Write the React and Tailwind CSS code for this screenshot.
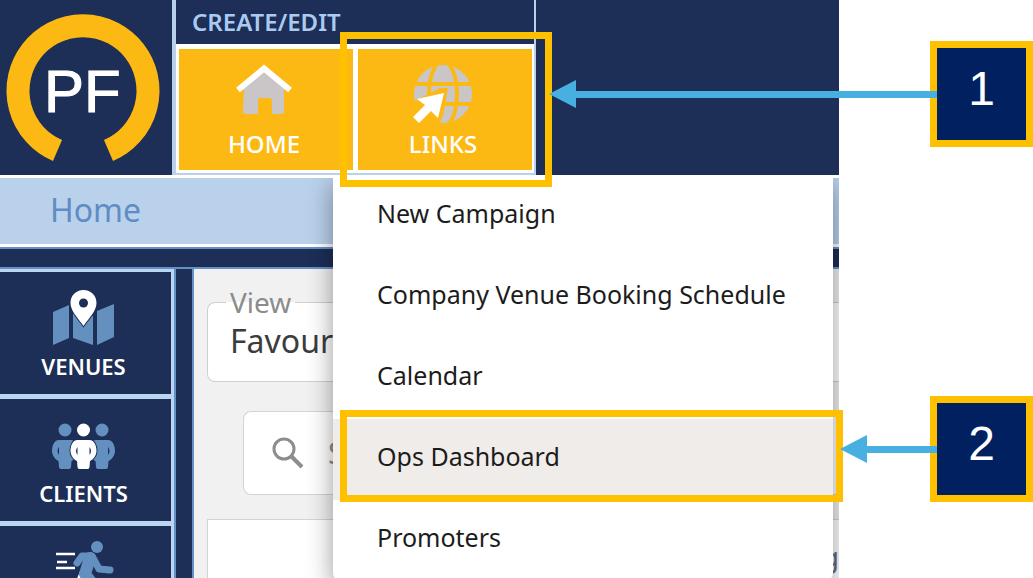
import React from 'react'

const menuItems = [
    { label: 'New Campaign' },
    { label: 'Company Venue Booking Schedule' },
    { label: 'Calendar' },
    { label: 'Ops Dashboard', active: true },
    { label: 'Promoters' },
]

function Logo() {
    return (
        <svg viewBox="0 0 172 175" className="w-[172px] h-[175px] shrink-0" role="img" aria-label="PF">
            <path d="M57.5 150.5 A65 65 0 1 1 108.5 150.5" fill="none" stroke="#fdb913" strokeWidth="23" />
            <text x="44" y="112" fontSize="60" fill="#ffffff" stroke="#ffffff" strokeWidth="1" fontFamily="Liberation Sans, sans-serif">PF</text>
        </svg>
    )
}

function HomeIcon() {
    return (
        <svg viewBox="0 0 60 60" className="w-[60px] h-[60px]" aria-hidden="true">
            <path d="M10 24 L30 8 L50 24 V48 Q50 50 48 50 H38 V37 Q38 34 35 34 H27 Q24 34 24 37 V50 H11 Q9 50 9 48 Z" fill="#cac5c7" />
            <path d="M4 26 L30 4.5 L56 26" fill="none" stroke="#ffffff" strokeWidth="6" />
        </svg>
    )
}

function LinksIcon() {
    return (
        <svg viewBox="0 0 60 60" className="w-[60px] h-[60px]" aria-hidden="true">
            <circle cx="30" cy="30" r="29" fill="#cac5c7" />
            <g fill="none" stroke="#fdb913" strokeWidth="4">
                <path d="M0 20 H60 M0 40 H60" />
                <ellipse cx="30" cy="30" rx="14" ry="33" />
            </g>
            <path d="M0 38 L-2 60 H26 L30 52 L35 24 L27 24 Z" fill="#fdb913" />
            <path d="M31 29 L25 54 L18 47 L6 59 L0 53 L12 41 L4 35 Z" fill="#ffffff" />
        </svg>
    )
}

function VenuesIcon() {
    return (
        <svg viewBox="0 0 64 56" className="w-16 h-14" aria-hidden="true">
            <path d="M1 22 L17 15 V48 L1 55 Z M21 22 L41 26 V55 L21 48 Z M45 21 L62 14 V47 L45 55 Z" fill="#6490c0" />
            <path
                d="M31.5 0 C24 0 18.5 5.5 18.5 13 C18.5 21 26 28 31.5 36 C37 28 44.5 21 44.5 13 C44.5 5.5 39 0 31.5 0 Z"
                fill="#ffffff"
                stroke="#1d2e57"
                strokeWidth="2"
                paintOrder="stroke"
            />
            <circle cx="31.5" cy="13" r="4.5" fill="#1d2e57" />
        </svg>
    )
}

function Person({ x, fill }) {
    return (
        <g transform={`translate(${x} 0)`}>
            <circle cx="0" cy="13" r="6.5" fill={fill} />
            <path
                d="M-6 23 H6 C11 23 13 29 13 34 C13 39 9 43 6.5 44 L6 50 Q6 52 4 52 H-4 Q-6 52 -6 50 L-6.5 44 C-9 43 -13 39 -13 34 C-13 29 -11 23 -6 23 Z"
                fill={fill}
                stroke="#1d2e57"
                strokeWidth="2"
                paintOrder="stroke"
            />
            <path d="M-6 30 Q-9 34 -6 38 Z M6 30 Q9 34 6 38 Z" fill="#1d2e57" />
        </g>
    )
}

function ClientsIcon() {
    return (
        <svg viewBox="0 0 64 56" className="w-16 h-14" aria-hidden="true">
            <Person x={13} fill="#6490c0" />
            <Person x={50} fill="#6490c0" />
            <Person x={31.5} fill="#ffffff" />
        </svg>
    )
}

function RunnerIcon() {
    return (
        <svg viewBox="0 0 64 56" className="w-16 h-14 overflow-visible" aria-hidden="true">
            <path d="M4 10 H23 M5 18 H15 M4 24 H23" stroke="#ffffff" strokeWidth="2.5" />
            <path d="M31 28 L26 40 L14 46" fill="none" stroke="#ffffff" strokeWidth="6" />
            <circle cx="45" cy="3" r="6" fill="#6490c0" />
            <g fill="none" stroke="#6490c0" strokeLinecap="round" strokeLinejoin="round">
                <path d="M25 19 L30 12 H40 L47 25 L58 26" strokeWidth="7" />
                <path d="M38 14 L33 30 L42 42" strokeWidth="12" />
            </g>
        </svg>
    )
}

function SearchIcon() {
    return (
        <svg viewBox="0 0 32 32" className="w-8 h-8 shrink-0" fill="none" stroke="#8d8d8d" aria-hidden="true">
            <circle cx="12" cy="12" r="10" strokeWidth="3" />
            <path d="M19 19 L30 30" strokeWidth="4" />
        </svg>
    )
}

function RibbonButton({ icon, label }) {
    return (
        <button type="button" className="w-[174px] h-[121px] pt-[15px] pr-1 flex flex-col items-center gap-1.5 bg-[#fdb913] cursor-pointer">
            {icon}
            <span className="text-[24px] leading-7 font-medium text-white">{label}</span>
        </button>
    )
}

function SideLink({ icon, label, title }) {
    return (
        <a href="#" aria-label={title} className="h-[122px] shrink-0 pt-[18px] pr-1 flex flex-col items-center gap-2 bg-[#1d2e57]">
            {icon}
            {label && <span className="text-[22px] leading-6 font-semibold text-white">{label}</span>}
        </a>
    )
}

function Callout({ number, arrow }) {
    return (
        <div className="relative w-[103px] h-[106px] pb-2.5 flex items-center justify-center border-[7px] border-[#ffc000] bg-[#002060]">
            <span className="text-[48px] leading-none text-white font-['Liberation_Sans',sans-serif]">{number}</span>
            <div className={`absolute right-full top-8 flex items-center ${arrow}`} aria-hidden="true">
                <svg viewBox="0 0 27 28" className="w-[27px] h-7 shrink-0">
                    <path d="M0 14 L27 0 V28 Z" fill="#47b0e0" />
                </svg>
                <div className="flex-1 h-[7px] bg-[#47b0e0]" />
            </div>
        </div>
    )
}

function App() {
    return (
        <div className="relative flex h-screen overflow-hidden bg-white font-['Noto_Sans','Open_Sans',sans-serif]">
            <div className="relative flex-1 min-w-0 flex flex-col overflow-hidden">
                <header className="relative z-10 flex bg-[#1d2e57] border-b-[3px] border-white">
                    <Logo />
                    <div className="border-l-4 border-r-2 border-b-2 border-[#bad1ec]">
                        <h2 className="h-11 pl-4 pt-1.5 text-[24px] leading-8 font-semibold text-[#a9cbf2]">CREATE/EDIT</h2>
                        <div className="flex gap-[5px] pt-[5px] pb-[3px] pl-[3px] pr-0.5 bg-white">
                            <RibbonButton icon={<HomeIcon />} label="HOME" />
                            <RibbonButton icon={<LinksIcon />} label="LINKS" />
                        </div>
                    </div>
                </header>

                <nav className="h-[69px] shrink-0 pl-[50px] pb-0.5 flex items-center bg-[#bad1ec] border-b-[3px] border-white">
                    <a href="#" className="text-[32px] leading-10 text-[#5f8cc2]">Home</a>
                </nav>
                <div className="h-[22px] shrink-0 bg-[#1d2e57] border-y-2 border-[#6492c8]" />

                <div className="flex flex-1 min-h-0">
                    <nav className="w-[174px] shrink-0 flex flex-col gap-[5px] border-t-[3px] border-r-[3px] border-[#bcd5f3] bg-[#bcd5f3]">
                        <SideLink icon={<VenuesIcon />} label="VENUES" />
                        <SideLink icon={<ClientsIcon />} label="CLIENTS" />
                        <SideLink icon={<RunnerIcon />} title="Tasks" />
                    </nav>
                    <div className="w-5 shrink-0 bg-[#1d2e57] border-x-2 border-[#6492c8]" />
                    <main className="flex-1 min-w-0 pl-[13px] pt-[18px] bg-[#f1f1f1]">
                        <fieldset className="pl-[22px] pb-4 border border-r-0 border-[#cfcfcf] rounded-l-lg bg-white">
                            <legend className="-ml-1 px-1 text-[28px] leading-[30px] text-[#8c8c8c]">
                                <label htmlFor="view">View</label>
                            </legend>
                            <select id="view" className="block w-full h-12 appearance-none text-[32px] leading-[48px] text-[#3c3c3c]">
                                <option>Favourites</option>
                            </select>
                        </fieldset>
                        <div className="ml-9 mt-[29px] h-[84px] pl-7 flex items-center gap-6 border border-r-0 border-[#d4d4d4] rounded-l-lg bg-white">
                            <SearchIcon />
                            <input
                                type="text"
                                aria-label="Search"
                                placeholder="Search"
                                className="flex-1 min-w-0 text-[30px] leading-10 placeholder:text-[#8c8c8c]"
                            />
                        </div>
                        <table className="mt-6 w-full border-t border-l border-[#d4d4d4] bg-white">
                            <thead>
                                <tr>
                                    <th className="pt-4 pb-10 text-right text-[28px] leading-10 font-normal text-[#5f6b8c]">Booking</th>
                                </tr>
                            </thead>
                        </table>
                    </main>
                </div>

                <ul className="absolute left-[333px] right-1.5 top-[176px] rounded-b-lg bg-white shadow-[0_8px_26px_rgba(0,0,0,0.4)]">
                    {menuItems.map((item) => (
                        <li key={item.label}>
                            <a
                                href="#"
                                className={`h-[81px] pl-11 pb-2 flex items-center text-[25px] leading-8 whitespace-nowrap text-[#1c1c1c] ${item.active ? 'bg-[#f0ecea]' : ''}`}
                            >
                                {item.label}
                            </a>
                        </li>
                    ))}
                </ul>
            </div>

            <aside className="relative z-20 w-[194px] shrink-0 pt-[41px] flex flex-col items-end gap-[249px]">
                <Callout number={1} arrow="w-[388px]" />
                <Callout number={2} arrow="w-[97px]" />
            </aside>

            {/* highlight frames over the ribbon button and the menu entry */}
            <div className="absolute z-10 left-[340px] top-8 w-[212px] h-[155px] border-[7px] border-[#ffc000] pointer-events-none" />
            <div className="absolute z-10 left-[340px] right-[190px] top-[410px] h-[92px] border-[7px] border-[#ffc000] pointer-events-none" />
        </div>
    )
}

export default App
